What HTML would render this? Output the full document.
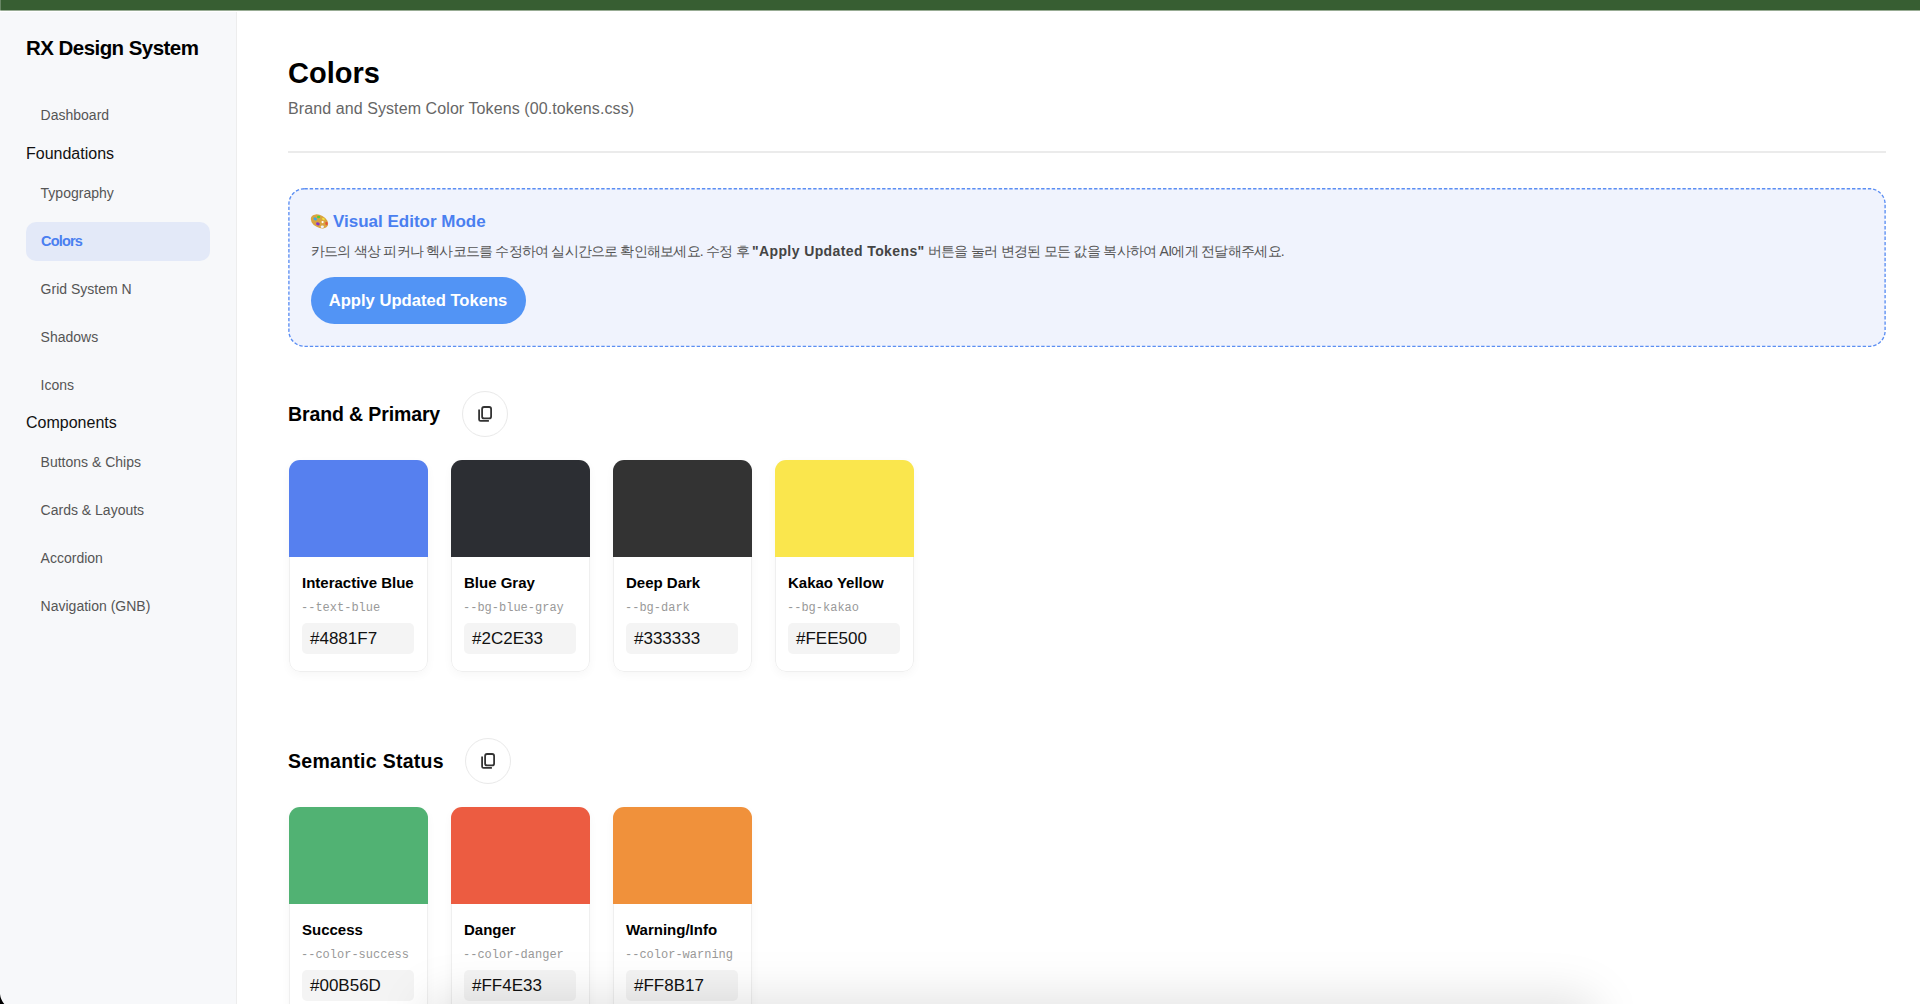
<!DOCTYPE html>
<html><head><meta charset="utf-8">
<style>
*{box-sizing:border-box;margin:0;padding:0}
html,body{width:1920px;height:1004px;overflow:hidden;background:#fff}
body{font-family:"Liberation Sans",sans-serif;position:relative;color:#111}
.abs{position:absolute;white-space:nowrap}
#topbar{position:absolute;left:0;top:0;width:1920px;height:11px;background:#375e32;border-bottom:1px solid #98ac94}
#side{position:absolute;left:0;top:12px;width:237px;height:992px;background:#f7f8fa;border-right:1px solid #ededed}
.brand{left:26px;font-weight:bold;font-size:20.5px;color:#000;line-height:24px;letter-spacing:-0.55px}
.nav{left:40.6px;font-size:14px;color:#555;line-height:20px}
.grp{left:26px;font-size:16px;color:#111;line-height:20px}
#active{position:absolute;left:26px;top:222px;width:184px;height:39px;background:#e3e9f8;border-radius:10px}
.navact{left:41px;font-size:14.5px;font-weight:bold;color:#4a7ff0;line-height:20px;letter-spacing:-0.8px}

.h1{left:288px;top:54.5px;font-size:29px;font-weight:bold;color:#000;line-height:36px}
.sub{left:288px;top:98.7px;font-size:16px;color:#666;line-height:20px;letter-spacing:0.09px}
#divider{position:absolute;left:288px;top:151px;width:1598px;height:2px;background:#ebebeb}
#editor{position:absolute;left:288px;top:188px;width:1598px;height:159px}
.vtitle{left:333px;top:212px;font-size:17px;font-weight:bold;color:#4a7ff0;line-height:20px}
.emoji{left:311px;top:214px;width:17px;height:14px}
.kdesc{left:311px;top:241px;font-size:14px;color:#555;line-height:20px}
.kdesc .k{letter-spacing:-0.78px}
.kdesc .k2{letter-spacing:-0.71px}
.kdesc b{font-weight:bold;color:#444;letter-spacing:0.4px}
#apply{position:absolute;left:311px;top:277px;width:215px;height:47px;border-radius:24px;background:#5294f5;color:#fff;font-size:16.6px;font-weight:bold;line-height:48px;text-align:center;text-indent:-1px}

.sec{font-size:19.5px;font-weight:bold;color:#000;line-height:24px}
.cbtn{position:absolute;width:46px;height:46px;border-radius:50%;border:1px solid #e9e9e9;background:#fff}
.cbtn svg{position:absolute;left:-1px;top:-1px}
.card{position:absolute;width:139px;height:212px;background:#fff;border-radius:11px;box-shadow:0 3px 10px rgba(0,0,0,0.035);overflow:hidden}
.card::after{content:"";position:absolute;left:0;top:0;width:139px;height:212px;border:1px solid #efefef;border-radius:11px;box-sizing:border-box;z-index:1}
.sw{position:absolute;left:0;top:0;width:139px;height:97px;z-index:2}
.cname{position:absolute;left:13px;top:113px;font-size:15px;font-weight:bold;color:#000;line-height:20px;white-space:nowrap}
.cvar{position:absolute;left:12px;top:139.5px;font-family:"Liberation Mono",monospace;font-size:12px;color:#999;line-height:16px;white-space:nowrap}
.chex{position:absolute;left:13px;top:163px;width:112px;height:31px;background:#f4f4f4;border-radius:5px;font-size:17px;color:#111;line-height:31px;padding-left:8px;white-space:nowrap}

#dockshadow{position:absolute;left:420px;top:994px;width:1180px;height:60px;border-radius:30px;background:rgba(0,0,0,0.10);filter:blur(22px);z-index:50}
#corner{position:absolute;left:0;top:986px;z-index:60}
</style></head>
<body>
<div id="topbar"></div><div style="position:absolute;left:0;top:0;width:1px;height:11px;background:rgba(255,255,255,0.25)"></div>
<div id="side"></div>
<div class="abs brand" style="top:36px">RX Design System</div>
<div class="abs nav" style="top:105px">Dashboard</div>
<div class="abs grp" style="top:144px">Foundations</div>
<div class="abs nav" style="top:183px">Typography</div>
<div id="active"></div>
<div class="abs navact" style="top:231px">Colors</div>
<div class="abs nav" style="top:279px">Grid System N</div>
<div class="abs nav" style="top:327px">Shadows</div>
<div class="abs nav" style="top:375px">Icons</div>
<div class="abs grp" style="top:413px">Components</div>
<div class="abs nav" style="top:452px">Buttons &amp; Chips</div>
<div class="abs nav" style="top:500px">Cards &amp; Layouts</div>
<div class="abs nav" style="top:548px">Accordion</div>
<div class="abs nav" style="top:596px">Navigation (GNB)</div>

<div class="abs h1">Colors</div>
<div class="abs sub">Brand and System Color Tokens (00.tokens.css)</div>
<div id="divider"></div>
<svg id="editor" width="1598" height="159" viewBox="0 0 1598 159"><rect x="0.9" y="0.7" width="1596.2" height="157.6" rx="15.5" fill="#f0f3fd" stroke="#5b8ef3" stroke-width="1.35" stroke-dasharray="3.4 1.9"/></svg>
<div class="abs vtitle">Visual Editor Mode</div>
<div class="abs kdesc"><span class="k">카드의 색상 피커나 헥사코드를 수정하여 실시간으로 확인해보세요. 수정 후 </span><b>"Apply Updated Tokens"</b><span class="k2"> 버튼을 눌러 변경된 모든 값을 복사하여 AI에게 전달해주세요.</span></div>
<div id="apply">Apply Updated Tokens</div>

<svg class="abs" style="left:306px;top:208px" width="28" height="26" viewBox="0 0 28 26">
 <ellipse cx="13.5" cy="13.4" rx="9.4" ry="6.2" fill="#d9a440" transform="rotate(28 13.5 13.4)"/>
 <ellipse cx="16.3" cy="18.8" rx="1.6" ry="1.3" fill="#f0f3fd"/>
 <circle cx="16.6" cy="14.1" r="1.1" fill="#fff"/>
 <ellipse cx="9.2" cy="10.9" rx="1.9" ry="1.4" fill="#3aa8e6" transform="rotate(35 9.2 10.9)"/>
 <ellipse cx="12.6" cy="9" rx="1.6" ry="1.2" fill="#4ccf3a"/>
 <ellipse cx="17.4" cy="11" rx="1.5" ry="1" fill="#f2de3e" transform="rotate(25 17.4 11)"/>
 <ellipse cx="11.9" cy="15.9" rx="1.9" ry="1.4" fill="#8834c6" transform="rotate(20 11.9 15.9)"/>
 <ellipse cx="20.5" cy="15.5" rx="1.2" ry="1.7" fill="#e55238" transform="rotate(-20 20.5 15.5)"/>
</svg>
<div class="abs sec" style="left:288px;top:402px;letter-spacing:-0.12px">Brand &amp; Primary</div>
<div class="cbtn" style="left:462px;top:391px"><svg width="46" height="46" viewBox="0 0 46 46"><rect x="20.1" y="16" width="9" height="11.4" rx="2" fill="none" stroke="#333" stroke-width="1.8"/><path d="M17.1 18.4V28.4Q17.1 29.9 18.6 29.9H26.9" fill="none" stroke="#333" stroke-width="1.8"/></svg></div>
<div class="abs sec" style="left:288px;top:749px;letter-spacing:0.28px">Semantic Status</div>
<div class="cbtn" style="left:465px;top:738px"><svg width="46" height="46" viewBox="0 0 46 46"><rect x="20.1" y="16" width="9" height="11.4" rx="2" fill="none" stroke="#333" stroke-width="1.8"/><path d="M17.1 18.4V28.4Q17.1 29.9 18.6 29.9H26.9" fill="none" stroke="#333" stroke-width="1.8"/></svg></div>
<div class="card" style="left:289px;top:460px"><div class="sw" style="background:#5680ef"></div><div class="cname">Interactive Blue</div><div class="cvar">--text-blue</div><div class="chex">#4881F7</div></div>
<div class="card" style="left:451px;top:460px"><div class="sw" style="background:#2c2e33"></div><div class="cname">Blue Gray</div><div class="cvar">--bg-blue-gray</div><div class="chex">#2C2E33</div></div>
<div class="card" style="left:613px;top:460px"><div class="sw" style="background:#333333"></div><div class="cname">Deep Dark</div><div class="cvar">--bg-dark</div><div class="chex">#333333</div></div>
<div class="card" style="left:775px;top:460px"><div class="sw" style="background:#fae64d"></div><div class="cname">Kakao Yellow</div><div class="cvar">--bg-kakao</div><div class="chex">#FEE500</div></div>
<div class="card" style="left:289px;top:807px"><div class="sw" style="background:#51b273"></div><div class="cname">Success</div><div class="cvar">--color-success</div><div class="chex">#00B56D</div></div>
<div class="card" style="left:451px;top:807px"><div class="sw" style="background:#ec5c41"></div><div class="cname">Danger</div><div class="cvar">--color-danger</div><div class="chex">#FF4E33</div></div>
<div class="card" style="left:613px;top:807px"><div class="sw" style="background:#f0913b"></div><div class="cname">Warning/Info</div><div class="cvar">--color-warning</div><div class="chex">#FF8B17</div></div>
<div id="dockshadow"></div>
<svg id="corner" width="20" height="18" viewBox="0 986 20 18"><path d="M0 994A18 18 0 0 0 4.3 1004H0Z" fill="#000"/></svg>
</body></html>
